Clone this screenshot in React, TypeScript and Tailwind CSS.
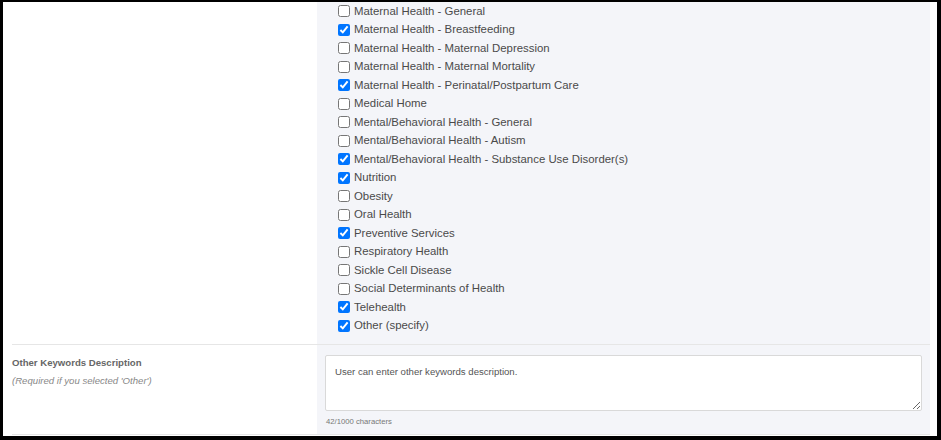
const topics: [string, boolean][] = [
  ["Maternal Health - General", false],
  ["Maternal Health - Breastfeeding", true],
  ["Maternal Health - Maternal Depression", false],
  ["Maternal Health - Maternal Mortality", false],
  ["Maternal Health - Perinatal/Postpartum Care", true],
  ["Medical Home", false],
  ["Mental/Behavioral Health - General", false],
  ["Mental/Behavioral Health - Autism", false],
  ["Mental/Behavioral Health - Substance Use Disorder(s)", true],
  ["Nutrition", true],
  ["Obesity", false],
  ["Oral Health", false],
  ["Preventive Services", true],
  ["Respiratory Health", false],
  ["Sickle Cell Disease", false],
  ["Social Determinants of Health", false],
  ["Telehealth", true],
  ["Other (specify)", true],
];

export default function App() {
  return (
    <div className="w-[941px] h-[440px] bg-black pt-[2px] pl-[3px] pr-[4px] pb-[4px] font-['Liberation_Sans',Arial,sans-serif]">
      <div className="h-full bg-white pl-[9px] pr-[7px] overflow-hidden">
        {/* keyword checklist */}
        <div className="flex border-b border-[#e6e6e6] h-[343px]">
          <div className="w-[305px] shrink-0"></div>
          <div className="flex-1 bg-[#f4f5f9] pl-[21px]">
            {topics.map(([label, checked]) => (
              <label
                key={label}
                className="flex items-center h-[18.5px] text-[11.4px] text-[#4a4a4a]"
              >
                <input
                  type="checkbox"
                  defaultChecked={checked}
                  className="m-0 mr-[4px] w-[12px] h-[12px] accent-[#0075ff]"
                />
                <span>{label}</span>
              </label>
            ))}
          </div>
        </div>

        {/* other keywords */}
        <div className="flex border-b border-[#e6e6e6] h-[90px]">
          <div className="w-[305px] shrink-0 pt-[11px]">
            <div className="text-[9.6px] font-bold text-[#666]">
              Other Keywords Description
            </div>
            <div className="text-[9.6px] italic text-[#888] mt-[4px]">
              (Required if you selected 'Other')
            </div>
          </div>
          <div className="flex-1 bg-[#f4f5f9] pl-[8px] pr-[8px] pt-[10px]">
            <textarea
              defaultValue="User can enter other keywords description."
              className="block w-[597px] h-[56px] bg-white border border-[#d9d9d9] rounded-[2px] px-[9px] py-[9px] text-[9.6px] text-[#555] outline-none"
            />
            <div className="text-[7.7px] text-[#777] mt-[5px] ml-[1px]">
              42/1000 characters
            </div>
          </div>
        </div>
      </div>
    </div>
  );
}
